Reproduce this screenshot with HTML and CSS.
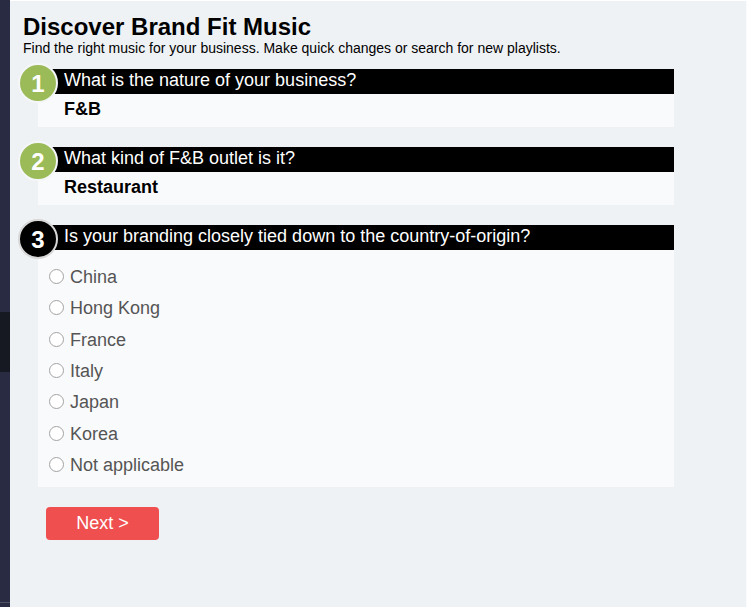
FILE: index.html
```html
<!DOCTYPE html>
<html lang="en">
<head>
<meta charset="utf-8">
<title>Discover Brand Fit Music</title>
<link rel="stylesheet" href="styles.css">
</head>
<body>
<div class="page">
  <aside class="sidebar">
    <div class="sb-top"></div>
    <div class="sb-dark"></div>
    <div class="sb-mid"></div>
    <div class="sb-line"></div>
    <div class="sb-end"></div>
  </aside>
  <main class="main">
    <h1 class="title">Discover Brand Fit Music</h1>
    <p class="subtitle">Find the right music for your business. Make quick changes or search for new playlists.</p>

    <div class="questions">
      <section class="question">
        <span class="step step-done">1</span>
        <div class="q-head">What is the nature of your business?</div>
        <div class="q-body">F&amp;B</div>
      </section>

      <section class="question">
        <span class="step step-done">2</span>
        <div class="q-head">What kind of F&amp;B outlet is it?</div>
        <div class="q-body">Restaurant</div>
      </section>

      <section class="question">
        <span class="step step-active">3</span>
        <div class="q-head">Is your branding closely tied down to the country-of-origin?</div>
        <div class="q-options">
          <label class="option"><input class="radio" type="radio" name="origin">China</label>
          <label class="option"><input class="radio" type="radio" name="origin">Hong Kong</label>
          <label class="option"><input class="radio" type="radio" name="origin">France</label>
          <label class="option"><input class="radio" type="radio" name="origin">Italy</label>
          <label class="option"><input class="radio" type="radio" name="origin">Japan</label>
          <label class="option"><input class="radio" type="radio" name="origin">Korea</label>
          <label class="option"><input class="radio" type="radio" name="origin">Not applicable</label>
        </div>
      </section>
    </div>

    <button class="next-btn" type="button">Next &gt;</button>
  </main>
</div>
</body>
</html>
```

FILE: styles.css
```css
html, body {
  margin: 0;
  padding: 0;
  background: #ffffff;
}

body {
  font-family: "Liberation Sans", Arial, sans-serif;
  color: #000;
}

.page {
  display: flex;
  width: 747px;
  height: 607px;
  overflow: hidden;
}

.sidebar {
  width: 10px;
  flex: 0 0 10px;
  display: flex;
  flex-direction: column;
}

.sb-top { height: 312px; background: #282b41; }
.sb-dark { height: 60px; background: #161922; }
.sb-mid { height: 230px; background: #282b41; }
.sb-line { height: 1px; background: #4d5062; }
.sb-end { flex: 1; background: #282b41; }

.main {
  flex: 1;
  background: #eff2f5;
  border-top: 1px solid #ffffff;
  border-right: 1px solid #fafbfc;
  padding: 12px 0 0 13px;
}

.title {
  margin: 0;
  font-size: 24px;
  font-weight: bold;
  line-height: 28px;
}

.subtitle {
  margin: 0;
  font-size: 14px;
  line-height: 15px;
}

.questions {
  margin-top: 13px;
  margin-left: 15px;
  width: 636px;
  display: flex;
  flex-direction: column;
  gap: 20px;
}

.question {
  position: relative;
  background: #f9fafc;
}

.step {
  position: absolute;
  left: -20px;
  top: -6px;
  width: 40px;
  height: 40px;
  box-sizing: border-box;
  border: 2px solid #f4f6f8;
  border-radius: 50%;
  display: flex;
  align-items: center;
  justify-content: center;
  color: #ffffff;
  font-size: 24px;
  font-weight: bold;
  line-height: 1;
  padding-top: 2px;
}

.step-done { background: #9bbb59; }
.step-active { background: #000000; border-color: #d8d8d8; }

.q-head {
  background: #000000;
  color: #ffffff;
  font-size: 18px;
  line-height: 23px;
  height: 23px;
  padding: 0 0 2px 26px;
}

.q-body {
  font-size: 18px;
  font-weight: bold;
  line-height: 31px;
  padding: 0 0 2px 26px;
}

.q-options {
  padding: 12px 0 6px 11px;
  display: flex;
  flex-direction: column;
}

.option {
  display: flex;
  align-items: center;
  height: 31.3px;
  font-size: 18px;
  color: #555555;
}

.radio {
  appearance: none;
  -webkit-appearance: none;
  width: 15px;
  height: 15px;
  margin: 0 6px 0 0;
  border: 1px solid #a3a3a3;
  border-radius: 50%;
  background: #ffffff;
  box-sizing: border-box;
  position: relative;
  top: -1px;
}

.next-btn {
  margin: 20px 0 0 23px;
  width: 113px;
  height: 33px;
  border: none;
  border-radius: 4px;
  background: #ef4f4f;
  color: #ffffff;
  font-family: "Liberation Sans", Arial, sans-serif;
  font-size: 18px;
  padding: 0;
}
```
